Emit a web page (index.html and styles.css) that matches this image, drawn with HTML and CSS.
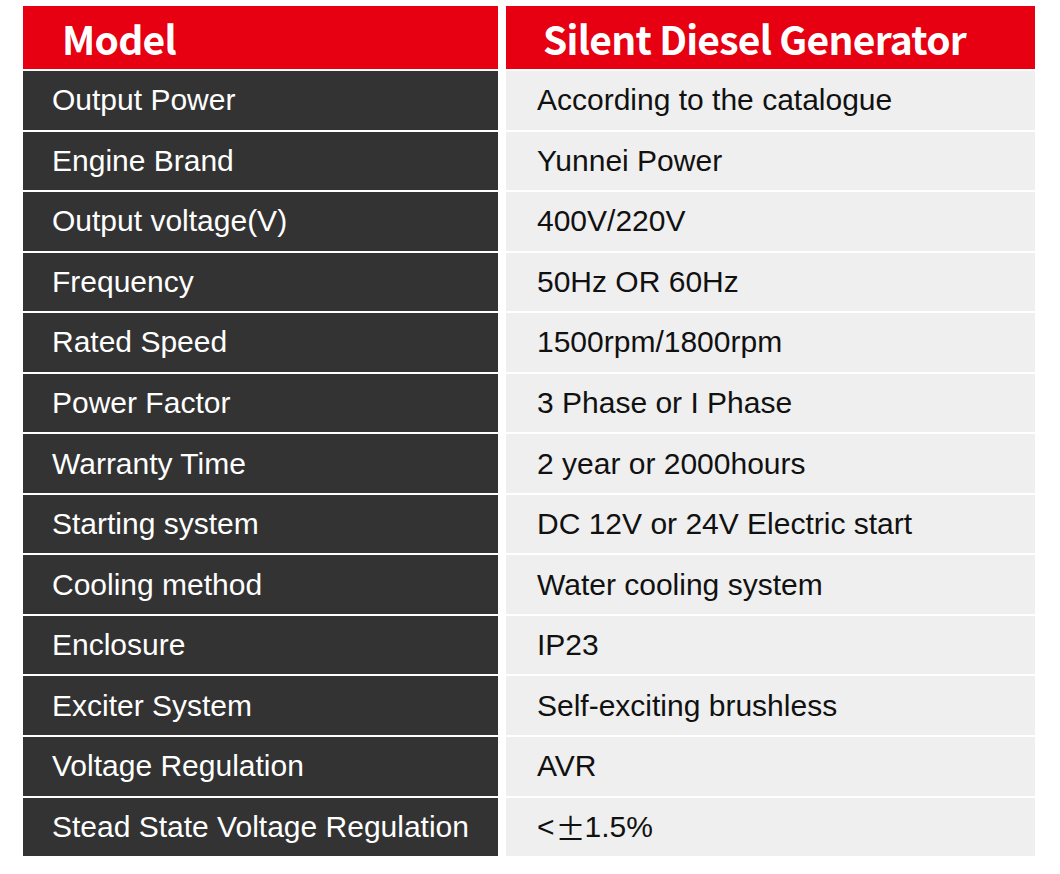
FILE: index.html
```html
<!DOCTYPE html>
<html lang="en">
<head>
<meta charset="utf-8">
<title>Silent Diesel Generator</title>
<link rel="stylesheet" href="styles.css">
</head>
<body>
<div class="table">
  <div class="cell head key">Model</div>
  <div class="cell head val">Silent Diesel Generator</div>

  <div class="cell key">Output Power</div><div class="cell val">According to the catalogue</div>
  <div class="cell key">Engine Brand</div><div class="cell val">Yunnei Power</div>
  <div class="cell key">Output voltage(V)</div><div class="cell val">400V/220V</div>
  <div class="cell key">Frequency</div><div class="cell val">50Hz OR 60Hz</div>
  <div class="cell key">Rated Speed</div><div class="cell val">1500rpm/1800rpm</div>
  <div class="cell key">Power Factor</div><div class="cell val">3 Phase or I Phase</div>
  <div class="cell key">Warranty Time</div><div class="cell val">2 year or 2000hours</div>
  <div class="cell key">Starting system</div><div class="cell val">DC 12V or 24V Electric start</div>
  <div class="cell key">Cooling method</div><div class="cell val">Water cooling system</div>
  <div class="cell key">Enclosure</div><div class="cell val">IP23</div>
  <div class="cell key">Exciter System</div><div class="cell val">Self-exciting brushless</div>
  <div class="cell key">Voltage Regulation</div><div class="cell val">AVR</div>
  <div class="cell key">Stead State Voltage Regulation</div><div class="cell val">&lt;<span class="sym">±</span>1.5%</div>
</div>
</body>
</html>
```

FILE: styles.css
```css
html, body {
  margin: 0;
  padding: 0;
  background: #ffffff;
}

.table {
  display: grid;
  grid-template-columns: 475px 529px;
  grid-template-rows: 63px repeat(13, 58.55px);
  column-gap: 8px;
  row-gap: 2px;
  margin: 6px 0 0 23px;
  font-family: "Liberation Sans", Arial, sans-serif;
  font-size: 30px;
}

.cell {
  display: flex;
  align-items: center;
  white-space: nowrap;
}

.key {
  background: #333333;
  color: #ffffff;
  padding-left: 29px;
}

.val {
  background: #efefef;
  color: #111111;
  padding-left: 31px;
}

.sym {
  font-family: "Noto Sans CJK SC", sans-serif;
  font-weight: 400;
  margin: 0 -1px 0 1px;
}

.head {
  background: #e60012;
  color: #ffffff;
  font-family: "Noto Sans CJK SC", "Noto Sans", sans-serif;
  font-weight: 700;
  font-size: 39px;
  letter-spacing: -0.75px;
}

.head.key {
  padding-left: 39px;
}

.head.val {
  padding-left: 37px;
}
```
